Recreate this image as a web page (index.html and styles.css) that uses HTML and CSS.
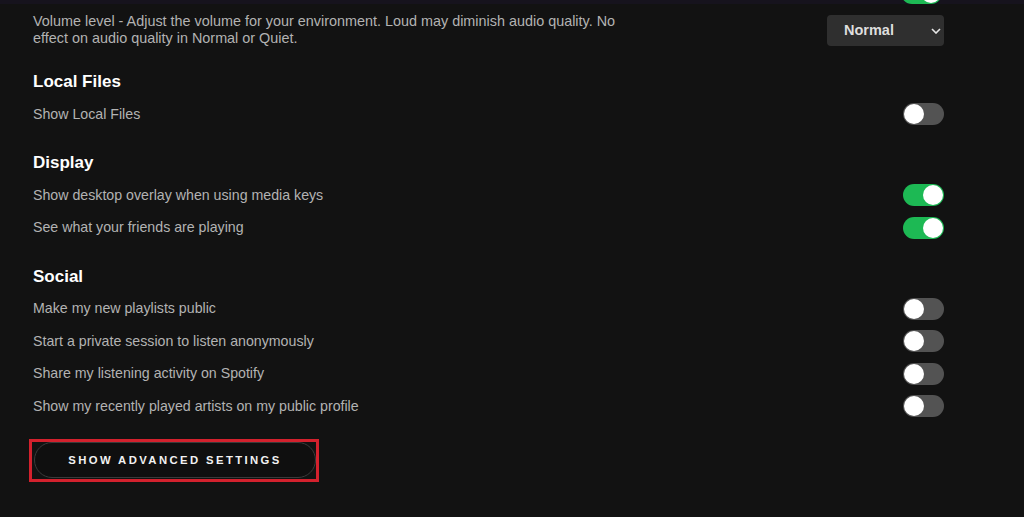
FILE: index.html
```html
<!DOCTYPE html>
<html lang="en">
<head>
<meta charset="utf-8">
<title>Settings</title>
<link rel="stylesheet" href="styles.css">
</head>
<body>
<div class="topbar">
  <div class="topbar-inner">
    <div class="peek"><span class="toggle on"></span></div>
  </div>
</div>
<main class="settings">
  <div class="row row-volume">
    <p class="label">Volume level - Adjust the volume for your environment. Loud may diminish audio quality. No<br>effect on audio quality in Normal or Quiet.</p>
    <div class="select">
      <span>Normal</span>
      <svg class="chev" width="10" height="6" viewBox="0 0 10 6"><path d="M1 1l4 4 4-4" fill="none" stroke="#e6e6e6" stroke-width="1.6"/></svg>
    </div>
  </div>

  <section class="section first">
    <h2>Local Files</h2>
    <div class="row"><p class="label">Show Local Files</p><span class="toggle"></span></div>
  </section>

  <section class="section">
    <h2>Display</h2>
    <div class="row"><p class="label">Show desktop overlay when using media keys</p><span class="toggle on"></span></div>
    <div class="row"><p class="label">See what your friends are playing</p><span class="toggle on"></span></div>
  </section>

  <section class="section">
    <h2>Social</h2>
    <div class="row"><p class="label">Make my new playlists public</p><span class="toggle"></span></div>
    <div class="row"><p class="label">Start a private session to listen anonymously</p><span class="toggle"></span></div>
    <div class="row"><p class="label">Share my listening activity on Spotify</p><span class="toggle"></span></div>
    <div class="row"><p class="label">Show my recently played artists on my public profile</p><span class="toggle"></span></div>
  </section>

  <div class="highlight">
    <button class="adv">SHOW ADVANCED SETTINGS</button>
  </div>
</main>
</body>
</html>
```

FILE: styles.css
```css
* { box-sizing: border-box; }
html, body { margin: 0; padding: 0; }
body {
  background: #121212;
  font-family: "Liberation Sans", Arial, sans-serif;
  color: #b3b3b3;
  width: 1024px;
  height: 517px;
  overflow: hidden;
}
.topbar {
  height: 4px;
  background: #16131d;
  overflow: hidden;
}
.topbar-inner {
  width: 944px;
  display: flex;
  justify-content: flex-end;
}
.peek {
  height: 4px;
  overflow: hidden;
  margin-right: 2px;
}
.peek .toggle { margin-top: -18px; }

.settings {
  width: 944px;
  padding: 8.5px 0 0 33px;
}
.row {
  display: flex;
  align-items: center;
  justify-content: space-between;
  height: 32.5px;
}
.row-volume { height: 35px; }
.label {
  margin: 0;
  font-size: 14.2px;
  line-height: 17px;
  color: #b3b3b3;
}
.row-volume .label { font-size: 14.4px; }
.select {
  width: 117px;
  height: 31px;
  background: #2f2f2f;
  border-radius: 4px;
  display: flex;
  align-items: center;
  justify-content: space-between;
  padding: 0 3px 0 17px;
  font-size: 14.5px;
  font-weight: 700;
  color: #dedede;
}
.chev { margin-top: 1px; }

.section { margin-top: 20.5px; }
.section.first { margin-top: 22.5px; }
.section h2 {
  margin: 0 0 4px;
  font-size: 17px;
  line-height: 24px;
  font-weight: 700;
  color: #ffffff;
}

.toggle {
  position: relative;
  display: block;
  width: 41px;
  height: 22px;
  border-radius: 11px;
  background: #535353;
  flex: none;
}
.toggle::after {
  content: "";
  position: absolute;
  top: 1px;
  left: 1px;
  width: 20px;
  height: 20px;
  border-radius: 50%;
  background: #ffffff;
}
.toggle.on { background: #1db954; }
.toggle.on::after { left: 20px; }

.highlight {
  display: inline-block;
  margin-top: 16px;
  margin-left: -4px;
  border: 3px solid #d3212d;
  padding: 0 0 1px 2px;
}
.adv {
  display: block;
  width: 282px;
  height: 36px;
  border-radius: 18px;
  border: 1px solid #3a3a3a;
  background: #0f0f0f;
  color: #f2f2f2;
  font-family: "Liberation Sans", Arial, sans-serif;
  font-size: 11.3px;
  font-weight: 700;
  letter-spacing: 2.4px;
  padding: 0;
  text-align: center;
}
```
